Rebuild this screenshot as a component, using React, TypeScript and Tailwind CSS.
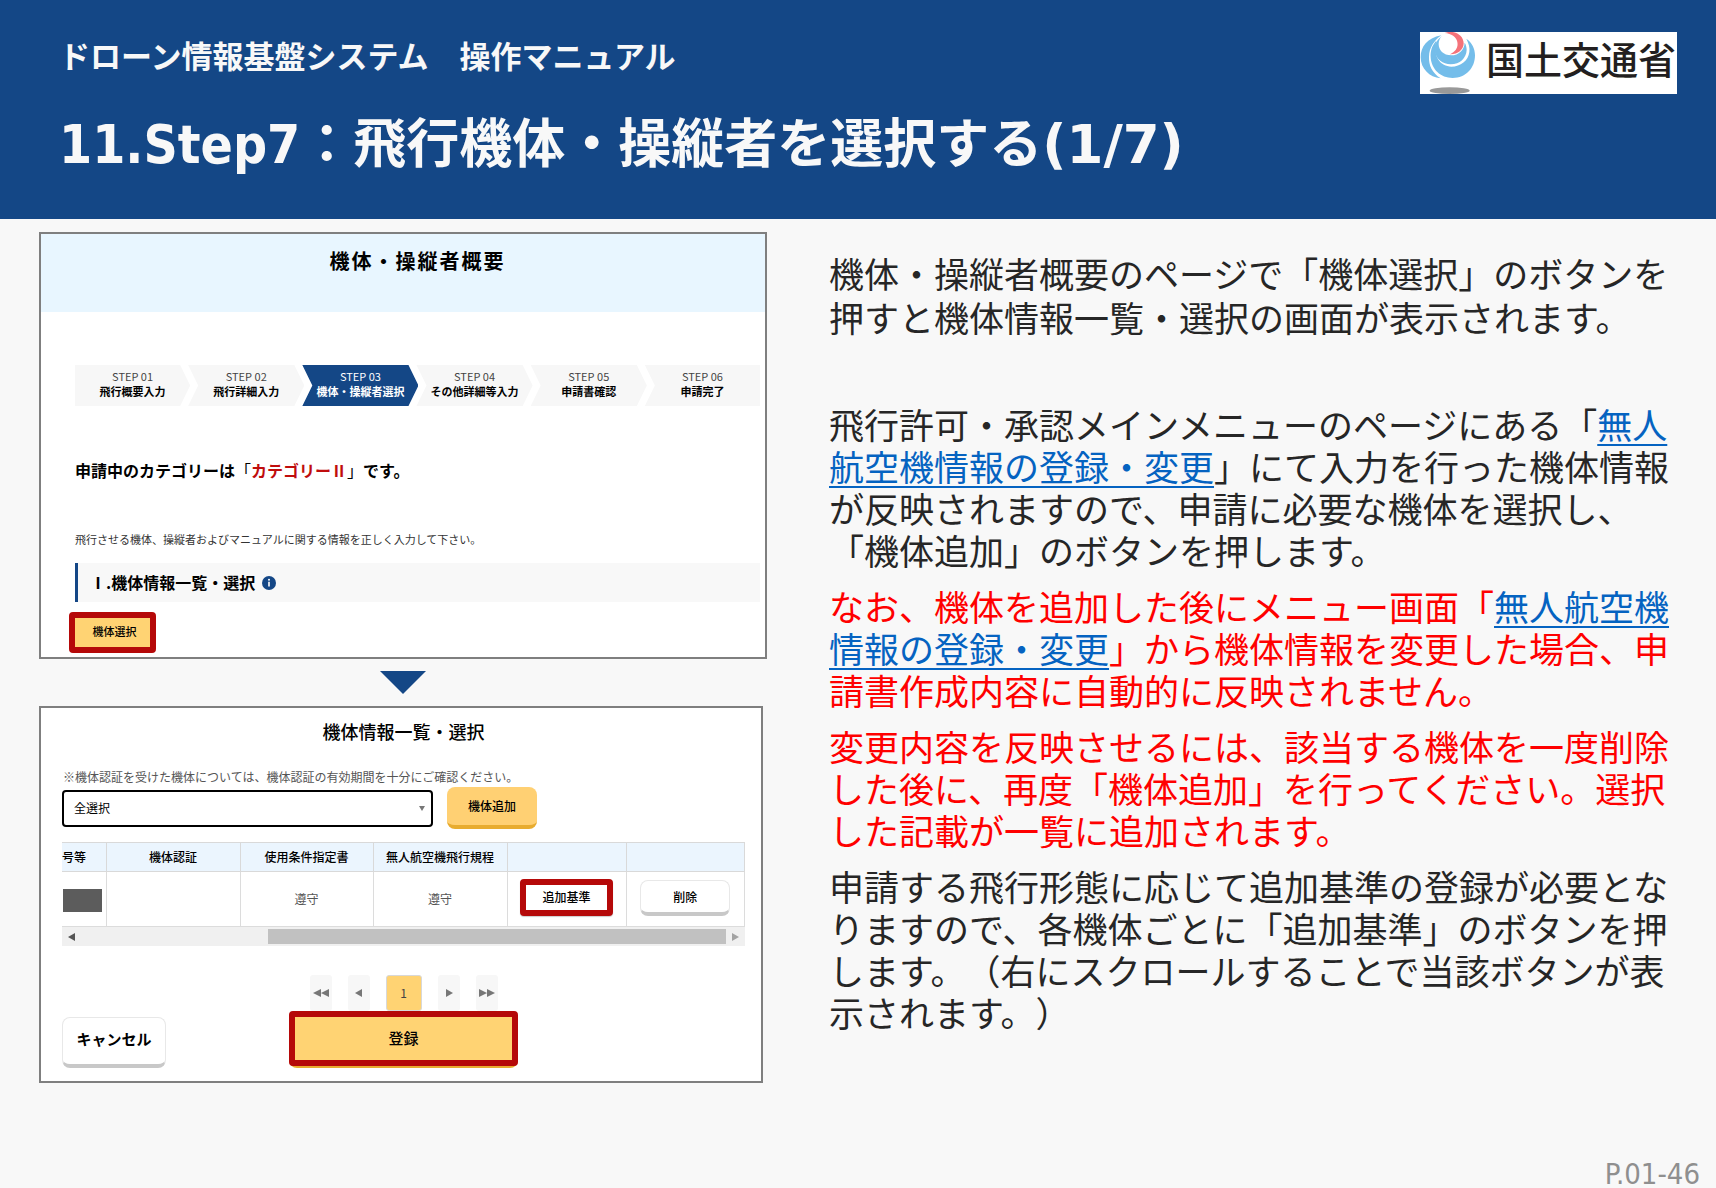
import React from "react";

const CJK = "font-['Noto_Sans_CJK_JP','Noto_Sans',sans-serif]";

function MinistryLogo() {
  return (
    <div className="flex h-[62px] w-[257px] items-start bg-white">
      <svg viewBox="0 0 168 186" className="h-[62px] w-[56px] shrink-0" aria-hidden="true">
        <path d="M64 10C20 18 2 46 2 76C2 110 28 136 62 139C36 122 26 100 27 74C28 46 42 26 64 10Z" fill="#74bdea" />
        <path
          d="M49 26C36 40 31 56 32 76C34 112 62 138 98 138C138 138 165 108 165 70C165 50 156 32 139 20C146 34 150 46 148 60C145 86 122 104 94 104C62 102 38 76 49 26Z"
          fill="#74bdea"
        />
        <path
          d="M66 12C48 26 40 42 44 58C49 82 68 97 92 97C120 97 139 78 140 54C140 46 138 38 134 32C133 54 116 70 94 70C70 70 56 54 56 36C56 26 60 18 66 12Z"
          fill="#74bdea"
        />
        <path d="M74 3C100 -8 131 8 131 34C131 54 112 68 90 67C108 58 115 46 112 30C109 14 94 5 74 3Z" fill="#f4727a" />
        <ellipse cx="89" cy="176" rx="60" ry="10" fill="#999" />
      </svg>
      <span className="ml-[10px] mt-[6px] whitespace-nowrap font-['Liberation_Sans','Noto_Sans_CJK_JP',sans-serif] text-[38px] leading-[46px] font-medium text-[#231f20]">
        国土交通省
      </span>
    </div>
  );
}

const steps = [
  ["STEP 01", "飛行概要入力"],
  ["STEP 02", "飛行詳細入力"],
  ["STEP 03", "機体・操縦者選択"],
  ["STEP 04", "その他詳細等入力"],
  ["STEP 05", "申請書確認"],
  ["STEP 06", "申請完了"],
];

function stepShape(i: number) {
  if (i === 0) return "mr-[-1px] [clip-path:polygon(0_0,calc(100%_-_10px)_0,100%_50%,calc(100%_-_10px)_100%,0_100%)]";
  if (i === steps.length - 1) return "ml-[-1px] [clip-path:polygon(0_0,100%_0,100%_100%,0_100%,10px_50%)]";
  return "mx-[-1px] [clip-path:polygon(0_0,calc(100%_-_10px)_0,100%_50%,calc(100%_-_10px)_100%,0_100%,10px_50%)]";
}

function OverviewPanel() {
  return (
    <section className="border-2 border-[#7f7f7f] bg-white pb-1 text-black">
      <div className="h-[78px] bg-[#e8f6ff] pt-[11px] pl-[34px] pr-[5px] text-center">
        <h2 className="text-xl leading-8 font-bold tracking-widest">機体・操縦者概要</h2>
      </div>
      <div className="pl-[34px] pr-[5px]">
        <ol className="mt-[53px] grid grid-cols-6">
          {steps.map(([no, label], i) => (
            <li
              key={no}
              className={`${stepShape(i)} h-[41px] pt-1 text-center text-[11px] leading-[15px] whitespace-nowrap ${
                i === 2 ? "bg-[#144786] text-white" : "bg-[#f7f7f7]"
              }`}
            >
              <div className={i === 2 ? "" : "text-[#444]"}>{no}</div>
              <div className="font-bold">{label}</div>
            </li>
          ))}
        </ol>
        <p className="mt-[52px] text-base leading-6 font-bold [text-spacing-trim:space-all]">
          申請中のカテゴリーは<span className="font-normal">「</span>
          <span className="text-[#c00d0d]">カテゴリーⅡ</span>
          <span className="font-normal">」</span>です。
        </p>
        <p className="mt-[49px] text-[11px] leading-4 text-[#333]">
          飛行させる機体、操縦者およびマニュアルに関する情報を正しく入力して下さい。
        </p>
        <div className="mt-4 flex h-[39px] items-center gap-[7px] border-l-[3px] border-[#144786] bg-[#f8f8f8] pl-3">
          <h3 className="pb-0.5 text-base leading-6 font-bold">Ⅰ.機体情報一覧・選択</h3>
          <svg viewBox="0 0 14 14" className="size-[14px]" role="img" aria-label="情報">
            <circle cx="7" cy="7" r="7" fill="#144786" />
            <circle cx="7" cy="3.8" r="1" fill="#fff" />
            <path d="M7 5.8V10.6" stroke="#fff" strokeWidth="1.6" fill="none" />
          </svg>
        </div>
        <button className="-ml-[6px] mt-[10px] block h-[41px] w-[87px] rounded border-[6px] border-[#b50909] bg-[#ffd373] pb-1 pl-1 text-[11px] leading-4 font-medium">
          機体選択
        </button>
      </div>
    </section>
  );
}

function Tri({ flip, double, className }: { flip?: boolean; double?: boolean; className: string }) {
  return (
    <svg viewBox={double ? "0 0 16 10" : "0 0 8 10"} className={`${double ? "w-4" : "w-2"} h-[10px] ${className}`} fill="currentColor" aria-hidden="true">
      <path
        d={
          double
            ? flip
              ? "M0 1L8 5L0 9ZM8 1L16 5L8 9Z"
              : "M8 1L0 5L8 9ZM16 1L8 5L16 9Z"
            : flip
              ? "M1 1L8 5L1 9Z"
              : "M7 1L0 5L7 9Z"
        }
      />
    </svg>
  );
}

function ListPanel() {
  const th = "border border-[#d9d9d9] p-0 font-medium";
  const td = "border border-[#dcdcdc] p-0";
  const pager = "flex h-9 w-[22px] items-center justify-center rounded-[3px] bg-[#f7f7f7]";
  return (
    <section className="mr-1 border-2 border-[#7f7f7f] bg-white pb-[13px] pl-[21px] pr-4 text-black">
      <h2 className="mt-[9px] text-center text-lg leading-7 font-medium">機体情報一覧・選択</h2>
      <label htmlFor="aircraft" className="mt-[22px] ml-px block text-xs leading-5 text-[#555]">
        ※機体認証を受けた機体については、機体認証の有効期間を十分にご確認ください。
      </label>
      <div className="flex items-center gap-[14px]">
        <div className="relative h-[37px] w-[371px]">
          <select id="aircraft" className="h-full w-full appearance-none rounded border-2 border-black bg-white pl-[10px] text-xs">
            <option>全選択</option>
          </select>
          <svg viewBox="0 0 6 5" className="pointer-events-none absolute top-[16px] right-2 h-[5px] w-[6px]" fill="#777" aria-hidden="true">
            <path d="M0 0H6L3 5Z" />
          </svg>
        </div>
        <button className="h-[42px] w-[90px] rounded-lg border-b-4 border-[#e8ac2f] bg-[#ffd073] text-xs font-medium">機体追加</button>
      </div>
      <table className="mt-[13px] w-full table-fixed border-collapse text-center text-xs leading-4">
        <colgroup>
          <col className="w-[44px]" />
          <col className="w-[134px]" />
          <col className="w-[133px]" />
          <col className="w-[134px]" />
          <col className="w-[119px]" />
          <col />
        </colgroup>
        <thead>
          <tr className="h-[29px] bg-[#ebf5fe]">
            <th className={`${th} border-l-0 text-left`}>号等</th>
            <th className={th}>機体認証</th>
            <th className={th}>使用条件指定書</th>
            <th className={th}>無人航空機飛行規程</th>
            <td className={th}></td>
            <td className={th}></td>
          </tr>
        </thead>
        <tbody>
          <tr className="h-[55px] text-[#555]">
            <td className={`${td} border-l-0`}>
              <div className="ml-px mt-[2px] h-[23px] w-[39px] bg-[#5c5c5c]" />
            </td>
            <td className={td}></td>
            <td className={td}>遵守</td>
            <td className={td}>遵守</td>
            <td className={td}>
              <button className="mx-auto mb-1 block h-[37px] w-[93px] rounded border-[6px] border-[#b50909] bg-white text-xs leading-4 font-medium text-black shadow-[0_1px_1px_#ccc]">
                追加基準
              </button>
            </td>
            <td className={td}>
              <button className="mx-auto mb-[2px] block h-9 w-[90px] rounded-lg border border-b-4 border-[#e8e8e8] border-b-[#c8c8c8] bg-white text-xs leading-4 font-medium text-black">
                削除
              </button>
            </td>
          </tr>
        </tbody>
      </table>
      <div className="flex h-[19px] items-center bg-[#f0f0f0] px-[6px]">
        <Tri className="text-[#555]" />
        <div className="mr-[5px] ml-auto h-[15px] w-[458px] bg-[#c1c1c1]" />
        <Tri flip className="text-[#a3a3a3]" />
      </div>
      <nav className="mt-[29px] flex justify-center gap-4 text-[#777]" aria-label="ページ">
        <button className={pager} aria-label="最初"><Tri double className="" /></button>
        <button className={pager} aria-label="前"><Tri className="" /></button>
        <button className="h-9 w-9 rounded-[3px] border border-[#d8d8d8] bg-[#ffd373] text-xs leading-4 text-[#444]">1</button>
        <button className={pager} aria-label="次"><Tri flip className="" /></button>
        <button className={pager} aria-label="最後"><Tri double flip className="" /></button>
      </nav>
      <div className="grid grid-cols-[104px_1fr_104px] items-end">
        <button className="h-[51px] rounded-lg border border-b-4 border-[#e8e8e8] border-b-[#c8c8c8] bg-white pb-1 text-[15px] leading-5 font-bold">キャンセル</button>
        <div className="mx-auto rounded-lg border-b-2 border-[#e8ac2f]">
          <button className="block h-[55px] w-[229px] rounded border-[6px] border-[#b50909] bg-[#ffd373] text-[15px] font-medium">登録</button>
        </div>
      </div>
    </section>
  );
}

export default function App() {
  const link = "text-[#0563c1] underline decoration-2 underline-offset-[5px]";
  return (
    <div lang="ja" className={`flex min-h-screen flex-col bg-[#f8f8f8] ${CJK}`}>
      <header className="flex h-[219px] items-start justify-between bg-[#144786] pt-8 pr-[39px] pl-[59px] text-[#f8f8f8]">
        <div>
          <p className="text-[31px] leading-[46px] font-bold">ドローン情報基盤システム　操作マニュアル</p>
          <h1 className="mt-7 font-['DejaVu_Sans_Condensed','Noto_Sans_CJK_JP',sans-serif] text-[53px] leading-[78px] font-bold">
            11.Step7：飛行機体・操縦者を選択する<span className="font-['DejaVu_Sans',sans-serif]">(1/7)</span>
          </h1>
        </div>
        <MinistryLogo />
      </header>
      <main className="grid grid-cols-[minmax(0,728fr)_minmax(0,847fr)] gap-[62px] pt-[13px] pr-10 pl-[39px]">
        <div>
          <OverviewPanel />
          <svg viewBox="0 0 46 23" className="mx-auto my-3 h-[23px] w-[46px]" aria-hidden="true">
            <path d="M0 0H46L23 23Z" fill="#144786" />
          </svg>
          <ListPanel />
        </div>
        <article className="space-y-[14px] pt-[22px] font-['Liberation_Sans','Noto_Sans_CJK_JP',sans-serif] text-[35px] leading-[42px] text-[#262626] [text-spacing-trim:space-all]">
          <p className="mb-16 leading-[44px]">機体・操縦者概要のページで「機体選択」のボタンを押すと機体情報一覧・選択の画面が表示されます。</p>
          <p>
            飛行許可・承認メインメニューのページにある「<a href="#register" className={link}>無人航空機情報の登録・変更</a>」にて入力を行った機体情報が反映されますので、申請に必要な機体を選択し、「機体追加」のボタンを押します。
          </p>
          <p className="text-[#ff0000]">
            なお、機体を追加した後にメニュー画面「<a href="#register" className={link}>無人航空機情報の登録・変更</a>」から機体情報を変更した場合、申請書作成内容に自動的に反映されません。
          </p>
          <p className="text-[#ff0000]">
            変更内容を反映させるには、該当する機体を一度削除した後に、再度「機体追加」を行ってください。選択した記載が一覧に追加されます。
          </p>
          <p>
            申請する飛行形態に応じて追加基準の登録が必要となりますので、各機体ごとに「追加基準」のボタンを押します。（右にスクロールすることで当該ボタンが表示されます。）
          </p>
        </article>
      </main>
      <footer className="mt-auto pr-4 text-right font-['DejaVu_Sans_Condensed','Noto_Sans',sans-serif] text-[29px] leading-7 text-[#8f8f8f]">
        P.01-46
      </footer>
    </div>
  );
}
